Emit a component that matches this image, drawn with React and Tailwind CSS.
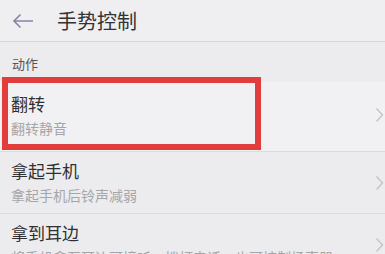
import { useState } from 'react'

const font = { fontFamily: '"Noto Sans CJK SC", "Noto Sans", sans-serif' }

const rows = [
  { title: '翻转', desc: '翻转静音', highlight: true },
  { title: '拿起手机', desc: '拿起手机后铃声减弱' },
  { title: '拿到耳边', desc: '将手机拿至耳边可接听、拨打电话，也可控制扬声器' },
]

function Chevron() {
  return (
    <svg width="9" height="16" viewBox="0 0 9 16" className="shrink-0">
      <path d="M1.5 1.5 L7.5 8 L1.5 14.5" fill="none" stroke="#c4c4c8" strokeWidth="1.4" />
    </svg>
  )
}

export default function App() {
  const [active] = useState(0)

  return (
    <div className="w-[385px] h-[254px] overflow-hidden bg-[#ececee] text-[#2e2e30]" style={font}>
      {/* 顶栏 */}
      <div className="h-[42px] flex items-center border-b border-[#d6d6da] bg-[#efeff1]">
        <svg width="22" height="16" viewBox="0 0 22 16" className="ml-[12px]">
          <path d="M21 8 H2 M8.5 1.5 L2 8 L8.5 14.5" fill="none" stroke="#8884a6" strokeWidth="1.6" />
        </svg>
        <span className="ml-[23px] text-[20px] leading-none text-[#333]">手势控制</span>
      </div>

      <div className="h-[40px] flex items-center pl-[12px] pt-[4px] text-[13px] text-[#555]">动作</div>

      <div>
        {rows.map((r, i) => (
          <div
            key={r.title}
            className={`relative flex items-center pl-[11px] pr-[1px] ${i === 0 ? 'h-[69px] pb-[3px] bg-[#f1f1f3]' : 'h-[62px] border-t border-[#dcdce0]'}`}
          >
            <div className="flex-1 flex flex-col gap-[6px]">
              <span className="text-[17px] leading-[20px] text-[#303032]">{r.title}</span>
              <span className="text-[14px] leading-[17px] text-[#a6a6aa] whitespace-nowrap">{r.desc}</span>
            </div>
            <Chevron />
            {r.highlight && active === 0 && (
              <div className="absolute left-[2px] top-[-5px] w-[259px] h-[73px] border-[6px] border-[#e23d3d] pointer-events-none" />
            )}
          </div>
        ))}
      </div>
    </div>
  )
}
